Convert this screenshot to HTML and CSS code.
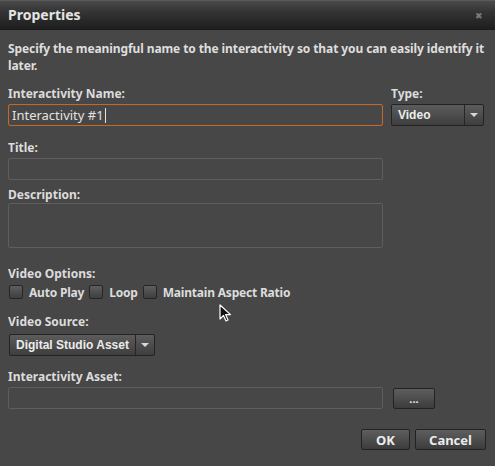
FILE: index.html
```html
<!DOCTYPE html>
<html lang="en">
  <head>
    <meta charset="UTF-8" />
    <title>Properties</title>
    <link rel="stylesheet" href="styles.css">
  </head>
  <body>
    <div class="dialog">
      <div class="titlebar">
        <span class="title">Properties</span>
        <span class="close">&#10006;</span>
      </div>

      <div class="content">
        <p class="intro">
          Specify the meaningful name to the interactivity so that you can easily identify it later.
        </p>

        <div class="row first">
          <div class="col-main">
            <div class="label">Interactivity Name:</div>
            <div class="input focused">Interactivity #1<span class="caret"></span></div>
          </div>
          <div class="col-side">
            <div class="label">Type:</div>
            <div class="select type-select">
              <span class="select-text">Video</span>
              <span class="select-arrow"></span>
            </div>
          </div>
        </div>

        <div class="group title-group">
          <div class="label">Title:</div>
          <div class="input wide"></div>
        </div>

        <div class="group desc-group">
          <div class="label">Description:</div>
          <div class="input wide textarea"></div>
        </div>

        <div class="group options-group">
          <div class="label">Video Options:</div>
          <div class="checks">
            <span class="check"></span><span class="check-label">Auto Play</span>
            <span class="check"></span><span class="check-label">Loop</span>
            <span class="check"></span><span class="check-label">Maintain Aspect Ratio</span>
          </div>
        </div>

        <div class="group source-group">
          <div class="label">Video Source:</div>
          <div class="select source-select">
            <span class="select-text">Digital Studio Asset</span>
            <span class="select-arrow"></span>
          </div>
        </div>

        <div class="group asset-group">
          <div class="label">Interactivity Asset:</div>
          <div class="asset-row">
            <div class="input wide"></div>
            <button class="btn browse">...</button>
          </div>
        </div>

        <div class="actions">
          <button class="btn ok">OK</button>
          <button class="btn cancel">Cancel</button>
        </div>
      </div>

      <!-- mouse pointer in the screenshot -->
      <svg class="pointer" width="13" height="19" viewBox="0 0 13 19">
        <path d="M1 1 L1 15 L4.5 11.5 L7 17 L9 16 L6.6 10.6 L11.5 10.6 Z" fill="#111" stroke="#fff" stroke-width="1.2" stroke-linejoin="round"/>
      </svg>
    </div>
  </body>
</html>
```

FILE: styles.css
```css
body {
  margin: 0;
  background: #474747;
  font-family: "Noto Sans", "Open Sans", sans-serif;
  color: #dcdcdc;
}

.dialog {
  position: relative;
  width: 495px;
  height: 466px;
  background: #474747;
  overflow: hidden;
}

/* Header bar */
.titlebar {
  height: 30px;
  box-sizing: border-box;
  padding: 0 8px;
  display: flex;
  align-items: center;
  justify-content: space-between;
  background: linear-gradient(to bottom, #4a4a4a 0%, #333 40%, #1e1e1e 100%);
  border-top: 1px solid #5a5a5a;
  border-bottom: 1px solid #1a1a1a;
}

.title {
  font-size: 14px;
  font-weight: bold;
  color: #e4e4e4;
  margin-top: -1px;
}

.close {
  font-size: 9px;
  color: #7c7c7c;
  margin-right: 4px;
}

.content {
  padding: 0 8px;
}

.intro {
  margin: 10px 0 0;
  font-size: 12px;
  font-weight: bold;
  line-height: 17px;
  color: #dedede;
  letter-spacing: -0.1px;
}

.label {
  font-size: 12px;
  font-weight: bold;
  line-height: 14px;
  color: #dcdcdc;
  margin-bottom: 3px;
}

.row {
  display: flex;
  gap: 8px;
}

.row.first {
  margin-top: 13px;
}

.col-main {
  width: 375px;
}

.col-side {
  width: 93px;
}

/* Text fields */
.input {
  box-sizing: border-box;
  height: 22px;
  border: 1px solid #5e5e5e;
  border-radius: 2px;
  background: #474747;
  font-size: 13px;
  line-height: 20px;
  padding: 0 3px;
  color: #e2e2e2;
}

.input.focused {
  border-color: #c2682a;
  box-shadow: inset 0 0 1px #9a5220;
}

.caret {
  display: inline-block;
  width: 1px;
  height: 15px;
  background: #e2e2e2;
  vertical-align: -3px;
  margin-left: 1px;
}

.wide {
  width: 375px;
}

.textarea {
  height: 45px;
}

.group {
  margin-top: 15px;
}

.desc-group {
  margin-top: 8px;
}

.desc-group .label {
  margin-bottom: 1px;
}

.options-group {
  margin-top: 19px;
}

.options-group .label {
  margin-bottom: 3px;
}

.source-group {
  margin-top: 15px;
}

.source-group .label {
  margin-bottom: 5px;
}

.asset-group {
  margin-top: 14px;
}

.asset-group .label {
  margin-bottom: 2px;
}

/* Checkboxes */
.checks {
  display: flex;
  align-items: center;
  height: 16px;
  padding-left: 1px;
}

.check {
  width: 12px;
  height: 12px;
  border: 1px solid #252525;
  border-radius: 2px;
  background: linear-gradient(to bottom, #5e5e5e, #3e3e3e);
  margin-right: 6px;
}

.check-label {
  font-size: 12px;
  font-weight: bold;
  color: #dcdcdc;
  margin-right: 5px;
  letter-spacing: -0.2px;
}

/* Drop downs */
.select {
  box-sizing: border-box;
  height: 22px;
  display: flex;
  border: 1px solid #232323;
  border-radius: 2px;
  background: linear-gradient(to bottom, #5c5c5c, #3e3e3e);
  font-family: "Liberation Sans", Arial, sans-serif;
  font-weight: bold;
  font-size: 12px;
  color: #ececec;
  white-space: nowrap;
}

.select-text {
  flex: 1;
  padding-left: 6px;
  line-height: 20px;
  border-right: 1px solid #262626;
}

.select-arrow {
  width: 18px;
  position: relative;
}

.select-arrow::after {
  content: "";
  position: absolute;
  left: 5px;
  top: 8px;
  border-left: 4px solid transparent;
  border-right: 4px solid transparent;
  border-top: 4px solid #d8d8d8;
}

.type-select {
  width: 93px;
}

.source-select {
  width: 146px;
  margin-left: 1px;
}

/* Buttons */
.btn {
  box-sizing: border-box;
  height: 21px;
  border: 1px solid #222;
  border-radius: 2px;
  background: linear-gradient(to bottom, #5e5e5e, #3c3c3c);
  color: #ececec;
  font-family: "Noto Sans", "Open Sans", sans-serif;
  font-weight: bold;
  font-size: 13px;
  padding: 0;
  line-height: 18px;
}

.asset-row {
  display: flex;
  align-items: center;
  gap: 10px;
}

.browse {
  width: 42px;
  height: 21px;
  margin-top: 2px;
  font-size: 11px;
}

.actions {
  display: flex;
  justify-content: flex-end;
  gap: 5px;
  margin-top: 20px;
  margin-right: 1px;
}

.ok {
  width: 49px;
}

.cancel {
  width: 71px;
}

.pointer {
  position: absolute;
  left: 219px;
  top: 304px;
}
```
